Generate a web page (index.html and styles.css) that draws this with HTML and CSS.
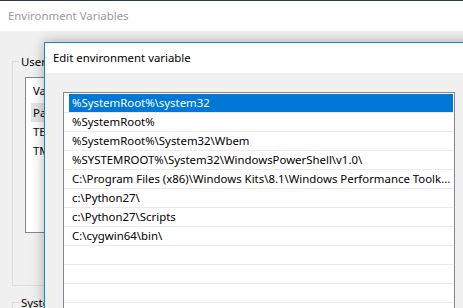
FILE: index.html
```html
<!DOCTYPE html>
<html lang="en">
<head>
    <meta charset="UTF-8">
    <meta name="viewport" content="width=device-width, initial-scale=1.0">
    <title>Edit environment variable</title>
    <link rel="stylesheet" href="styles.css">
</head>
<body>
    <div class="desktop">
        <!-- parent dialog, mostly hidden behind the edit dialog -->
        <div class="env-window">
            <div class="titlebar inactive">Environment Variables</div>
            <div class="env-body">
                <fieldset class="group user-group">
                    <legend>User variables for user</legend>
                    <div class="listview">
                        <div class="lv-header">Variable</div>
                        <div class="lv-row selected">Path</div>
                        <div class="lv-row">TEMP</div>
                        <div class="lv-row">TMP</div>
                    </div>
                </fieldset>
                <fieldset class="group">
                    <legend>System variables</legend>
                </fieldset>
            </div>
        </div>

        <div class="edit-window">
            <div class="titlebar">Edit environment variable</div>
            <div class="edit-body">
                <div class="path-list">
                    <div class="path-row"><span class="path-item selected">%SystemRoot%\system32</span></div>
                    <div class="path-row"><span class="path-item">%SystemRoot%</span></div>
                    <div class="path-row"><span class="path-item">%SystemRoot%\System32\Wbem</span></div>
                    <div class="path-row"><span class="path-item">%SYSTEMROOT%\System32\WindowsPowerShell\v1.0\</span></div>
                    <div class="path-row"><span class="path-item">C:\Program Files (x86)\Windows Kits\8.1\Windows Performance Toolk...</span></div>
                    <div class="path-row"><span class="path-item">c:\Python27\</span></div>
                    <div class="path-row"><span class="path-item">c:\Python27\Scripts</span></div>
                    <div class="path-row"><span class="path-item">C:\cygwin64\bin\</span></div>
                    <div class="path-row"><span class="path-item"></span></div>
                    <div class="path-row"><span class="path-item"></span></div>
                    <div class="path-row"><span class="path-item"></span></div>
                    <div class="path-row"><span class="path-item"></span></div>
                </div>
            </div>
        </div>
    </div>
</body>
</html>
```

FILE: styles.css
```css
body {
    margin: 0;
    font-family: "Noto Sans", Arial, sans-serif;
    font-size: 11.4px;
    color: #000;
    background: #f0f0f0;
}
.desktop {
    position: relative;
    width: 463px;
    height: 308px;
    overflow: hidden;
}
.titlebar {
    height: 30px;
    line-height: 30px;
    padding-left: 8px;
    background: #fff;
    white-space: nowrap;
}
.titlebar.inactive {
    color: #999;
}

/* Environment Variables dialog */
.env-window {
    height: 100%;
    border-top: 1px solid #2b3945;
    background: #f0f0f0;
}
.env-body {
    padding: 0 0 0 12px;
}
.group {
    width: 440px;
    margin: 22px 0 0 0;
    padding: 0 0 52px 6px;
    border: 1px solid #dcdcdc;
}
.group legend {
    padding: 0 2px;
    line-height: 17px;
    white-space: nowrap;
}
.group + .group {
    margin-top: 8px;
}
.listview {
    height: 154px;
    margin: 7px 0 0 6px;
    background: #fff;
    border: 1px solid #828790;
}
.lv-header {
    height: 25px;
    line-height: 25px;
    padding-left: 7px;
}
.lv-row {
    height: 19px;
    line-height: 19px;
    margin-left: 5px;
    padding-left: 2px;
}
.lv-row.selected {
    background: #e5e5e5;
}

/* Edit environment variable dialog */
.edit-window {
    position: absolute;
    left: 44px;
    top: 42px;
    width: 480px;
    height: 320px;
    background: #f0f0f0;
    border: 1px solid #1883d7;
    box-shadow: 0 0 12px rgba(0, 0, 0, 0.3);
}
.edit-body {
    padding: 19px 0 0 18px;
}
.path-list {
    width: 390px;
    padding-top: 1px;
    background: #fff;
    border: 1px solid #828790;
}
.path-row {
    display: flex;
    height: 18px;
    padding: 0 1px 0 5px;
    border-bottom: 1px solid #ebebeb;
}
.path-item {
    flex: 1;
    padding-left: 3px;
    line-height: 18px;
    white-space: nowrap;
    overflow: hidden;
}
.path-item.selected {
    background: #0078d7;
    color: #fff;
}
```
